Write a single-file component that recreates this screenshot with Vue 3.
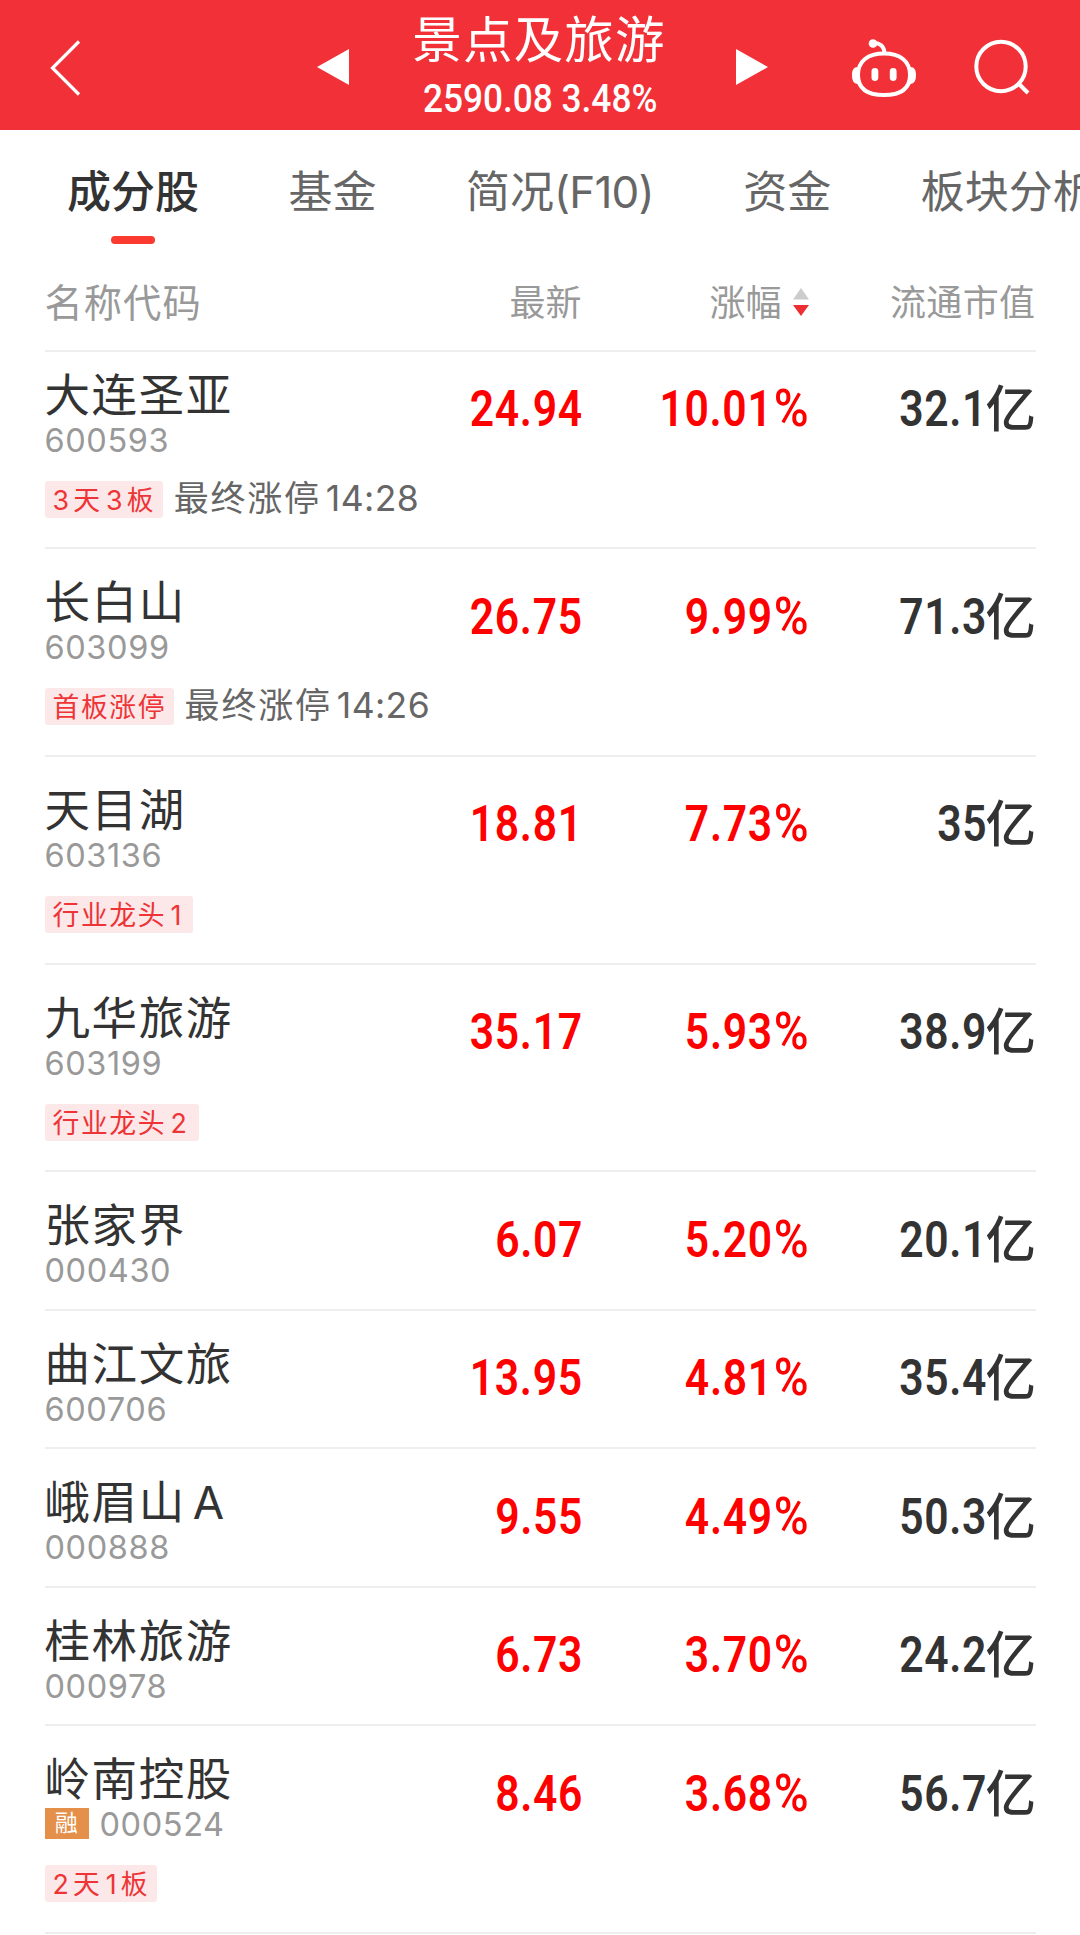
<template>
  <div class="page">
    <header class="topbar">
      <svg class="back" width="40" height="60" viewBox="0 0 40 60">
        <path d="M32 3.5 L5.5 30 L32 56.5" fill="none" stroke="#fff" stroke-width="3.2" />
      </svg>
      <svg class="prev" width="32" height="36" viewBox="0 0 32 36">
        <path d="M0 18 L32 0 V36 Z" fill="#fff" />
      </svg>
      <div class="heading">
        <h1>景点及旅游</h1>
        <p><span class="quote">2590.08 3.48%</span></p>
      </div>
      <svg class="next" width="32" height="36" viewBox="0 0 32 36">
        <path d="M32 18 L0 0 V36 Z" fill="#fff" />
      </svg>
      <svg class="robot" width="66" height="62" viewBox="0 0 66 62">
        <g fill="none" stroke="#fff" stroke-width="4">
          <path d="M33 16.500 C49 16.500 59 24 59 38 C59 52 49 58 33 58 C17 58 7 52 7 38 C7 24 17 16.500 33 16.500 Z" />
          <path d="M22 6 C29 5.500 33 9 33.5 16" />
        </g>
        <circle cx="22" cy="6.5" r="4.3" fill="#fff" />
        <path d="M7 30 C2.500 30 1 33 1 38 C1 43 2.500 47 7 47 Z M59 30 C63.500 30 65 33 65 38 C65 43 63.500 47 59 47 Z" fill="#fff" />
        <rect x="20.500" y="31" width="6.800" height="13" rx="3.400" fill="#fff" />
        <rect x="38.800" y="31" width="6.800" height="13" rx="3.400" fill="#fff" />
      </svg>
      <svg class="search" width="56" height="58" viewBox="0 0 56 58">
        <g fill="none" stroke="#fff" stroke-width="4">
          <circle cx="27" cy="28.500" r="24.700" />
          <path d="M44.500 45.500 L54 55" />
        </g>
      </svg>
    </header>

    <nav class="tabs">
      <div class="tab" v-for="(tab, index) in tabs" :key="tab" :class="{ active: index === current }" @click="current = index">
        <span v-for="(part, i) in splitText(tab)" :key="i" :class="{ latin: part.latin }">{{ part.text }}</span>
      </div>
    </nav>

    <div class="cols labels">
      <span class="label-name">名称代码</span>
      <span>最新</span>
      <span class="sorted">涨幅
        <svg width="16" height="30" viewBox="0 0 16 30">
          <path d="M8 0 L16 11.500 H0 Z" fill="#ccc" />
          <path d="M8 28 L16 17 H0 Z" fill="#eb2f32" />
        </svg>
      </span>
      <span>流通市值</span>
    </div>

    <div class="stock" v-for="stock in stocks" :key="stock.code" :class="{ tagged: stock.tag }">
      <div class="cols">
        <div class="info">
          <div class="name">
            <span v-for="(part, i) in splitText(stock.name)" :key="i" :class="{ latin: part.latin }">{{ part.text }}</span>
          </div>
          <div class="code"><i v-if="stock.margin">融</i>{{ stock.code }}</div>
        </div>
        <div class="num up"><b>{{ stock.price }}</b></div>
        <div class="num up"><b>{{ stock.change }}<em>%</em></b></div>
        <div class="num"><b>{{ stock.cap }}</b><span class="unit">亿</span></div>
      </div>
      <div class="extra" v-if="stock.tag">
        <div class="tag">
          <span v-for="(part, i) in splitText(stock.tag)" :key="i" :class="{ latin: part.latin }">{{ part.text }}</span>
        </div>
        <div class="note" v-if="stock.time">最终涨停<span class="latin">{{ stock.time }}</span></div>
      </div>
    </div>
  </div>
</template>

<script setup>
// imports ------------------
import { ref } from "vue";

// properties
const current = ref(0),
    tabs = ref(["成分股", "基金", "简况(F10)", "资金", "板块分析"]),
    stocks = ref([
        { name: "大连圣亚", code: "600593", price: "24.94", change: "10.01", cap: "32.1", tag: "3天3板", time: "14:28" },
        { name: "长白山", code: "603099", price: "26.75", change: "9.99", cap: "71.3", tag: "首板涨停", time: "14:26" },
        { name: "天目湖", code: "603136", price: "18.81", change: "7.73", cap: "35", tag: "行业龙头1" },
        { name: "九华旅游", code: "603199", price: "35.17", change: "5.93", cap: "38.9", tag: "行业龙头2" },
        { name: "张家界", code: "000430", price: "6.07", change: "5.20", cap: "20.1" },
        { name: "曲江文旅", code: "600706", price: "13.95", change: "4.81", cap: "35.4" },
        { name: "峨眉山A", code: "000888", price: "9.55", change: "4.49", cap: "50.3" },
        { name: "桂林旅游", code: "000978", price: "6.73", change: "3.70", cap: "24.2" },
        { name: "岭南控股", code: "000524", price: "8.46", change: "3.68", cap: "56.7", tag: "2天1板", margin: true }
    ])

// methods
// separates chinese from latin text, so that the latin part can have its own spacing
const splitText = (text) => {
    return text.match(/[\x20-\x7e]+|[^\x20-\x7e]+/g).map((t) => ({ text: t, latin: /[\x20-\x7e]/.test(t) }))
}
</script>

<style>
body {
  background: #fff;
}
</style>

<style scoped>
.page {
  width: 1080px;
  height: 1935px;
  overflow: hidden;
  background: #fff;
  color: #333;
  font-family: Inter, "Noto Sans CJK SC", sans-serif;
}
svg {
  display: block;
  flex: none;
}
.topbar {
  display: flex;
  align-items: flex-start;
  height: 130px;
  background: #f23037;
  color: #fff;
}
.back {
  margin: 38px 0 0 46.500px;
}
.prev {
  margin: 49px 0 0 230.500px;
}
.heading {
  width: 387px;
  text-align: center;
}
h1 {
  margin: 10px -1px 0 -6px;
  font-size: 49.500px;
  font-weight: 400;
  line-height: 60px;
  letter-spacing: 1.200px;
  text-indent: -2px;
}
.heading p {
  margin: 9px 0 0 -5px;
  line-height: 40px;
}
.quote {
  display: inline-block;
  font-family: Roboto, sans-serif;
  font-size: 38.500px;
  font-weight: 500;
  transform: scaleX(.915);
  white-space: nowrap;
}
.next {
  margin-top: 49px;
}
.robot {
  margin: 36.500px 0 0 82.500px;
}
.search {
  margin: 38px 0 0 57.500px;
}
.tabs {
  display: flex;
  gap: 89.500px;
  height: 114px;
  padding-left: 67px;
  color: #666;
  font-size: 44px;
  line-height: 124px;
  white-space: nowrap;
}
.tab {
  display: flex;
  flex: none;
  position: relative;
}
.tab .latin {
  letter-spacing: -.8px;
}
.active {
  color: #333;
  font-weight: 500;
}
.active::after {
  content: "";
  position: absolute;
  left: 50%;
  bottom: 0;
  width: 44px;
  height: 8.500px;
  margin-left: -22px;
  border-radius: 4px;
  background: #fb3a30;
}
.cols {
  display: grid;
  grid-template-columns: 300px 237px 226px 228px;
  width: 991px;
}
.labels {
  height: 105.500px;
  margin-left: 44.500px;
  border-bottom: 2px solid #eee;
  color: #999;
  font-size: 36px;
  line-height: 118px;
  text-align: right;
}
.labels > span:last-child {
  letter-spacing: .4px;
}
.label-name {
  font-size: 38.300px;
  letter-spacing: 1px;
  text-align: left;
}
.sorted {
  display: flex;
  justify-content: flex-end;
  gap: 11px;
}
.sorted svg {
  margin: 43.500px -1px 0 0;
}
.stock {
  box-sizing: border-box;
  width: 991px;
  height: 138.500px;
  margin-left: 44.500px;
  padding-top: 30px;
  border-bottom: 2px solid #eee;
}
.tagged {
  height: 207.750px;
}
.labels + .stock {
  height: 197.700px;
  padding-top: 20px;
}
.name {
  height: 52px;
  font-size: 45.500px;
  line-height: 48px;
  letter-spacing: 1.600px;
}
.name .latin {
  margin-left: 7px;
}
.code {
  display: flex;
  align-items: center;
  height: 34px;
  color: #999;
  font-size: 32.500px;
  line-height: 34px;
  letter-spacing: .6px;
}
.code i {
  width: 44px;
  height: 31px;
  margin: -4px 11px 0 0;
  background: #e5904a;
  color: #fff;
  font-size: 23px;
  font-style: normal;
  line-height: 30px;
  text-align: center;
}
.num {
  display: flex;
  justify-content: flex-end;
  padding-top: 7.500px;
  line-height: 59px;
}
.num b {
  font-family: Roboto, sans-serif;
  font-size: 50.500px;
  font-weight: 600;
  letter-spacing: .8px;
  transform: scaleX(.845);
  transform-origin: right;
}
.num em {
  display: inline-block;
  margin-left: 2.500px;
  font-size: 51px;
  font-style: normal;
  font-weight: 500;
  transform: scaleX(1.1);
  transform-origin: right;
}
.num em {
  margin-left: 5px;
}
.up {
  margin-right: -1.500px;
  color: #f00;
}
.unit {
  margin: 0 -.5px 0 -2px;
  font-size: 50.500px;
  font-weight: 500;
}
.extra {
  display: flex;
  align-items: center;
  gap: 11px;
  height: 37px;
  margin-top: 23px;
}
.tag {
  height: 37px;
  padding: 0 7.500px 0 8px;
  border-radius: 3px;
  background: #fce8e9;
  color: #ee3436;
  font-size: 26.800px;
  line-height: 39px;
  letter-spacing: 1.600px;
}
.tag .latin {
  margin: 0 2.500px 0 4.500px;
}
.tag .latin:first-child {
  margin-left: 0;
}
.note {
  color: #666;
  font-size: 35px;
  line-height: 35px;
  padding-bottom: 2px;
  letter-spacing: 1.800px;
}
.note .latin {
  margin-left: 5px;
  font-size: 35.500px;
  letter-spacing: .4px;
}
</style>
